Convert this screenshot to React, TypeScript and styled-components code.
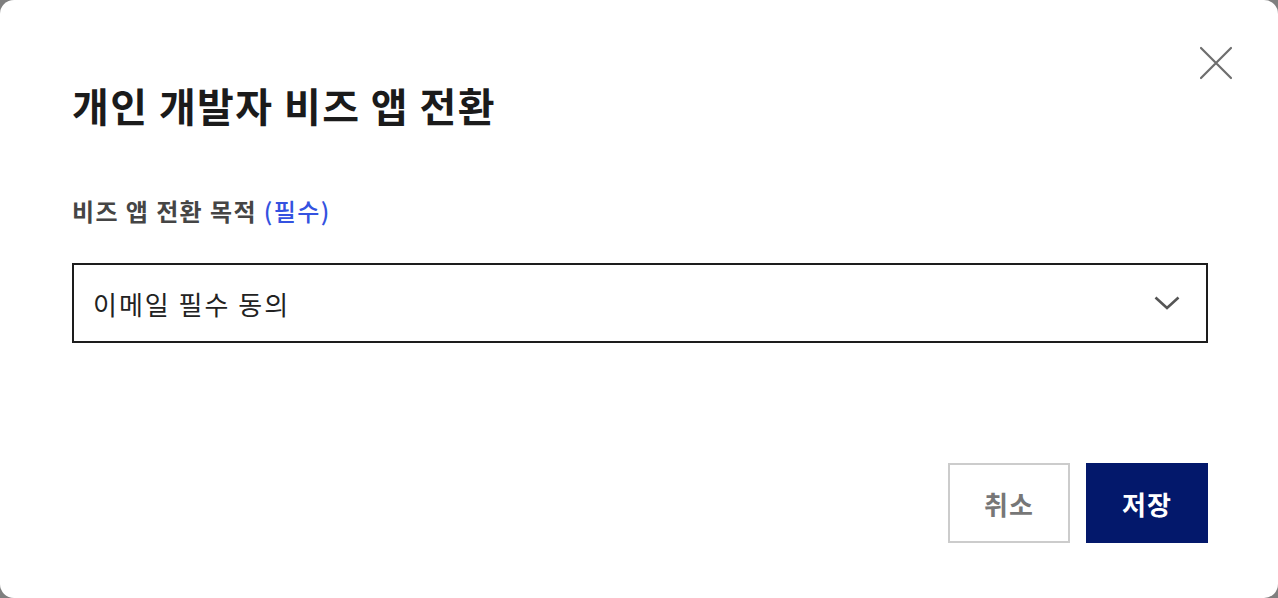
import * as React from 'react';
import styled, { createGlobalStyle } from 'styled-components';

const GlobalStyle = createGlobalStyle`
  html, body {
    margin: 0;
    padding: 0;
    background: #7f7f7f;
  }
  body {
    font-family: "Noto Sans CJK KR", "Noto Sans", sans-serif;
  }
`;

const Dialog = styled.div`
  box-sizing: border-box;
  width: 1278px;
  height: 598px;
  background: #fff;
  border-radius: 14px;
  position: relative;
  display: flex;
  flex-direction: column;
  padding: 79px 70px 55px 72px;
`;

const CloseButton = styled.button`
  position: absolute;
  top: 44px;
  right: 43px;
  width: 38px;
  height: 38px;
  padding: 0;
  border: 0;
  background: none;
  display: flex;
  align-items: center;
  justify-content: center;
  cursor: pointer;
`;

const Title = styled.h2`
  margin: 0;
  font-size: 40px;
  font-weight: 700;
  line-height: 52px;
  color: #1b1b1b;
  letter-spacing: 1.4px;
`;

const Label = styled.label`
  display: block;
  margin-top: 64px;
  font-size: 24px;
  font-weight: 700;
  line-height: 32px;
  color: #454545;
  letter-spacing: 1.4px;
`;

const Required = styled.span`
  color: #3452e0;
  font-weight: 500;
`;

const SelectBox = styled.div`
  box-sizing: border-box;
  margin-top: 36px;
  height: 80px;
  border: 2px solid #1d1d1d;
  display: flex;
  align-items: center;
  justify-content: space-between;
  padding: 0 26px 0 19px;
  font-size: 26px;
  letter-spacing: 2px;
  color: #222;
`;

const Footer = styled.div`
  margin-top: auto;
  display: flex;
  justify-content: flex-end;
  gap: 16px;
`;

const Button = styled.button<{ $primary?: boolean }>`
  box-sizing: border-box;
  width: 122px;
  height: 80px;
  font-family: inherit;
  font-size: 26px;
  font-weight: 700;
  letter-spacing: 1px;
  cursor: pointer;
  border: 2px solid ${(p) => (p.$primary ? '#03186b' : '#cccccc')};
  background: ${(p) => (p.$primary ? '#03186b' : '#fff')};
  color: ${(p) => (p.$primary ? '#fff' : '#777')};
`;

export default function App() {
  return (
    <>
      <GlobalStyle />
      <Dialog>
        <CloseButton aria-label="닫기">
          <svg width="34" height="34" viewBox="0 0 34 34">
            <path d="M2 2 L32 32 M32 2 L2 32" stroke="#6e6e6e" strokeWidth="2.2" strokeLinecap="round" />
          </svg>
        </CloseButton>
        <Title>개인 개발자 비즈 앱 전환</Title>
        <Label>
          비즈 앱 전환 목적 <Required>(필수)</Required>
        </Label>
        <SelectBox>
          <span>이메일 필수 동의</span>
          <svg width="26" height="14" viewBox="0 0 26 14">
            <path d="M1.5 1.5 L13 12 L24.5 1.5" fill="none" stroke="#555" strokeWidth="2.6" />
          </svg>
        </SelectBox>
        <Footer>
          <Button>취소</Button>
          <Button $primary>저장</Button>
        </Footer>
      </Dialog>
    </>
  );
}
